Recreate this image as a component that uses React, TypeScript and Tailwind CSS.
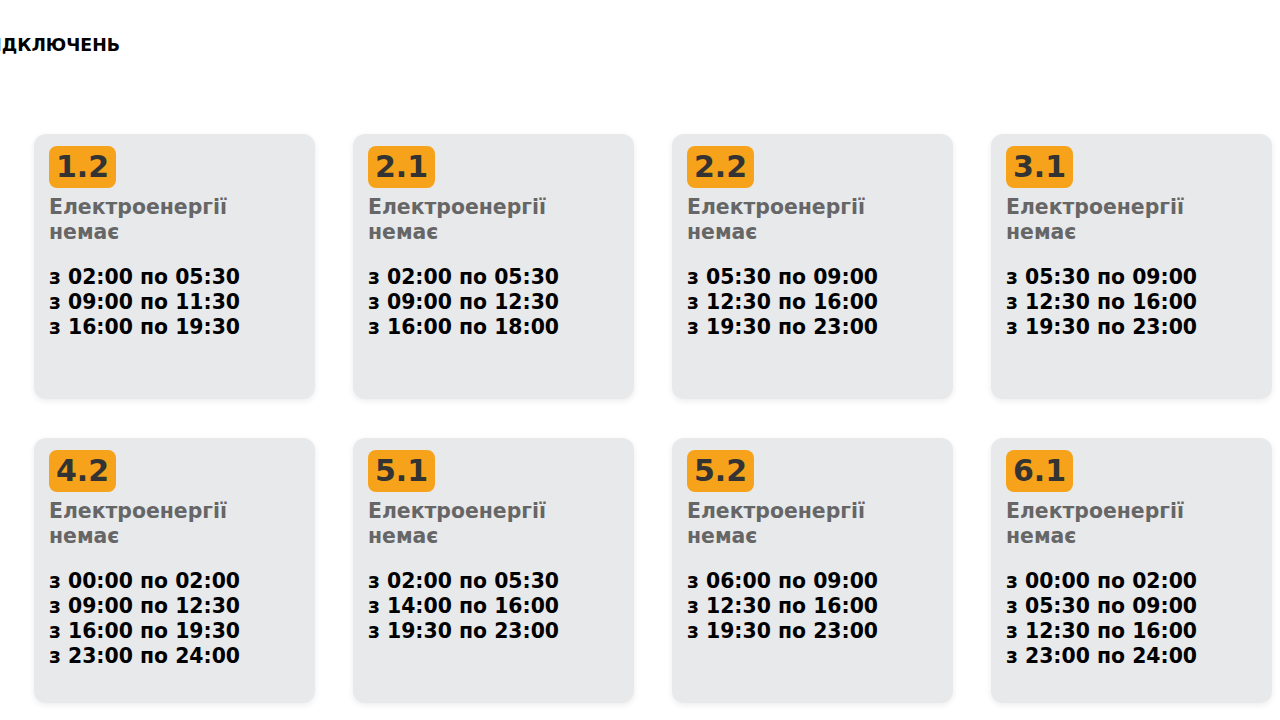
const groups = [
  { id: '1.2', times: ['з 02:00 по 05:30', 'з 09:00 по 11:30', 'з 16:00 по 19:30'] },
  { id: '2.1', times: ['з 02:00 по 05:30', 'з 09:00 по 12:30', 'з 16:00 по 18:00'] },
  { id: '2.2', times: ['з 05:30 по 09:00', 'з 12:30 по 16:00', 'з 19:30 по 23:00'] },
  { id: '3.1', times: ['з 05:30 по 09:00', 'з 12:30 по 16:00', 'з 19:30 по 23:00'] },
  { id: '4.2', times: ['з 00:00 по 02:00', 'з 09:00 по 12:30', 'з 16:00 по 19:30', 'з 23:00 по 24:00'] },
  { id: '5.1', times: ['з 02:00 по 05:30', 'з 14:00 по 16:00', 'з 19:30 по 23:00'] },
  { id: '5.2', times: ['з 06:00 по 09:00', 'з 12:30 по 16:00', 'з 19:30 по 23:00'] },
  { id: '6.1', times: ['з 00:00 по 02:00', 'з 05:30 по 09:00', 'з 12:30 по 16:00', 'з 23:00 по 24:00'] },
];

function GroupCard({ id, times }: { id: string; times: string[] }) {
  return (
    <div className="h-[265px] rounded-xl bg-[#e8e9eb] px-[15px] pt-[12px] shadow-[0_2px_6px_rgba(0,0,0,0.08)]">
      <div className="inline-block rounded-lg bg-[#f6a31b] px-[7px] text-[30px] leading-[42px] font-bold text-[#333]">
        {id}
      </div>
      <p className="mt-[7px] w-[200px] text-[20.4px] leading-[25px] font-bold text-[#666]">
        Електроенергії немає
      </p>
      <div className="mt-[20px] text-[20.4px] leading-[25px] font-bold text-black">
        {times.map((t) => (
          <div key={t}>{t}</div>
        ))}
      </div>
    </div>
  );
}

export default function App() {
  return (
    <div className="min-h-screen overflow-hidden bg-white font-['DejaVu_Sans',sans-serif]">
      {/* Header, scrolled off the left edge */}
      <h1 className="ml-[-18px] pt-[33px] text-[17.4px] leading-[24px] font-bold whitespace-nowrap text-black">
        ВІДКЛЮЧЕНЬ
      </h1>

      {/* Groups */}
      <div className="mt-[77px] grid w-[1272px] grid-cols-4 gap-x-[38px] gap-y-[39px] pl-[34px]">
        {groups.map((g) => (
          <GroupCard key={g.id} id={g.id} times={g.times} />
        ))}
      </div>
    </div>
  );
}
